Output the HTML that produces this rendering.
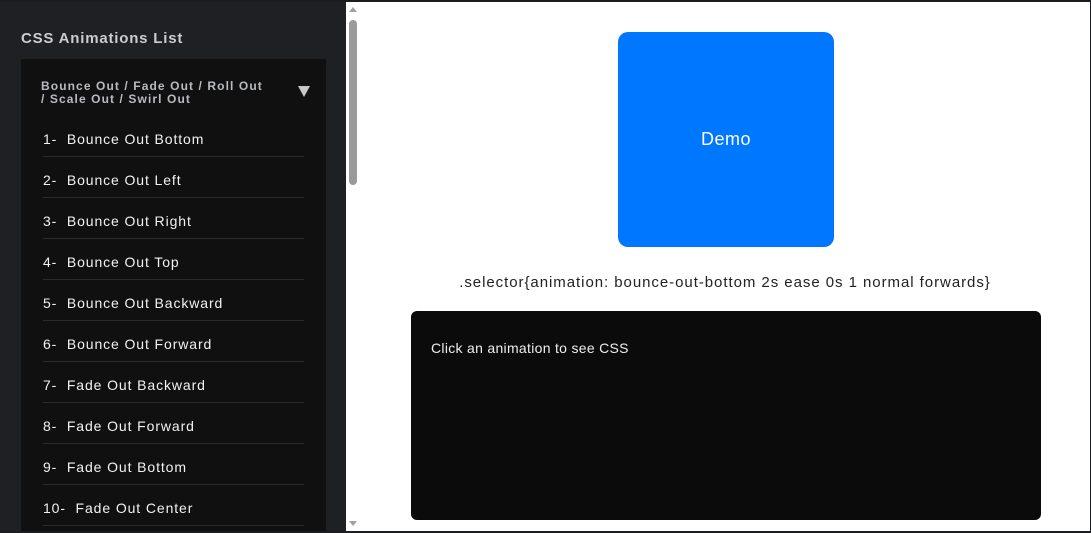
<!DOCTYPE html>
<html><head><style>
*{margin:0;padding:0;box-sizing:border-box}
html,body{width:1091px;height:533px;overflow:hidden}
body{background:#1b1d21;font-family:"Liberation Sans",sans-serif;position:relative}
.side{position:absolute;left:0;top:2px;width:346px;height:529px;background:#1e2024;overflow:hidden}
.title{position:absolute;left:21px;top:28px;color:#c9ccd1;font-size:15px;font-weight:bold;letter-spacing:.8px}
.box{position:absolute;left:21px;top:57px;width:305px;height:480px;background:#101010}
.hd{position:absolute;left:20px;top:21px;color:#b8bbc0;font-size:12px;font-weight:bold;line-height:13px;letter-spacing:1.1px;white-space:nowrap}
.arr{position:absolute;left:277px;top:27px;width:0;height:0;border-left:6px solid transparent;border-right:6px solid transparent;border-top:11px solid #c8c8c8}
.it{position:absolute;left:22px;width:261px;height:41px;border-bottom:1px solid #2a2a2a;color:#f2f2f2;font-size:14px;line-height:46px;letter-spacing:.9px;overflow:hidden}
.sb{position:absolute;left:346px;top:2px;width:14px;height:529px;background:#fff}
.th{position:absolute;left:3px;top:18px;width:8px;height:165px;background:#9a9a9a;border-radius:4px}
.main{position:absolute;left:360px;top:2px;width:730px;height:529px;background:#fff}
.demo{position:absolute;left:258px;top:30px;width:216px;height:215px;background:#0077ff;border-radius:10px;color:#fff;font-size:18px;text-align:center;line-height:215px;letter-spacing:.5px}
.sel{position:absolute;left:0;width:730px;top:272px;text-align:center;font-size:15px;color:#222;letter-spacing:.95px}
.code{position:absolute;left:51px;top:309px;width:630px;height:209px;background:#0b0b0b;border-radius:6px;color:#eee;font-size:14px;padding:29px 20px;letter-spacing:.3px}
</style></head><body>
<div class="side">
<div class="title">CSS Animations List</div>
<div class="box">
<div class="hd">Bounce Out / Fade Out / Roll Out<br>/ Scale Out / Swirl Out</div>
<div class="arr"></div>
<div class="it" style="top:57px">1-&nbsp; Bounce Out Bottom</div>
<div class="it" style="top:98px">2-&nbsp; Bounce Out Left</div>
<div class="it" style="top:139px">3-&nbsp; Bounce Out Right</div>
<div class="it" style="top:180px">4-&nbsp; Bounce Out Top</div>
<div class="it" style="top:221px">5-&nbsp; Bounce Out Backward</div>
<div class="it" style="top:262px">6-&nbsp; Bounce Out Forward</div>
<div class="it" style="top:303px">7-&nbsp; Fade Out Backward</div>
<div class="it" style="top:344px">8-&nbsp; Fade Out Forward</div>
<div class="it" style="top:385px">9-&nbsp; Fade Out Bottom</div>
<div class="it" style="top:426px">10-&nbsp; Fade Out Center</div>
</div>
</div>
<div class="sb"><div style="position:absolute;left:3px;top:5px;border-left:4px solid transparent;border-right:4px solid transparent;border-bottom:5px solid #a0a0a0"></div><div class="th"></div><div style="position:absolute;left:3px;top:519px;border-left:4px solid transparent;border-right:4px solid transparent;border-top:5px solid #a0a0a0"></div></div>
<div class="main">
<div class="demo">Demo</div>
<div class="sel">.selector{animation: bounce-out-bottom 2s ease 0s 1 normal forwards}</div>
<div class="code">Click an animation to see CSS</div>
</div>
</body></html>
